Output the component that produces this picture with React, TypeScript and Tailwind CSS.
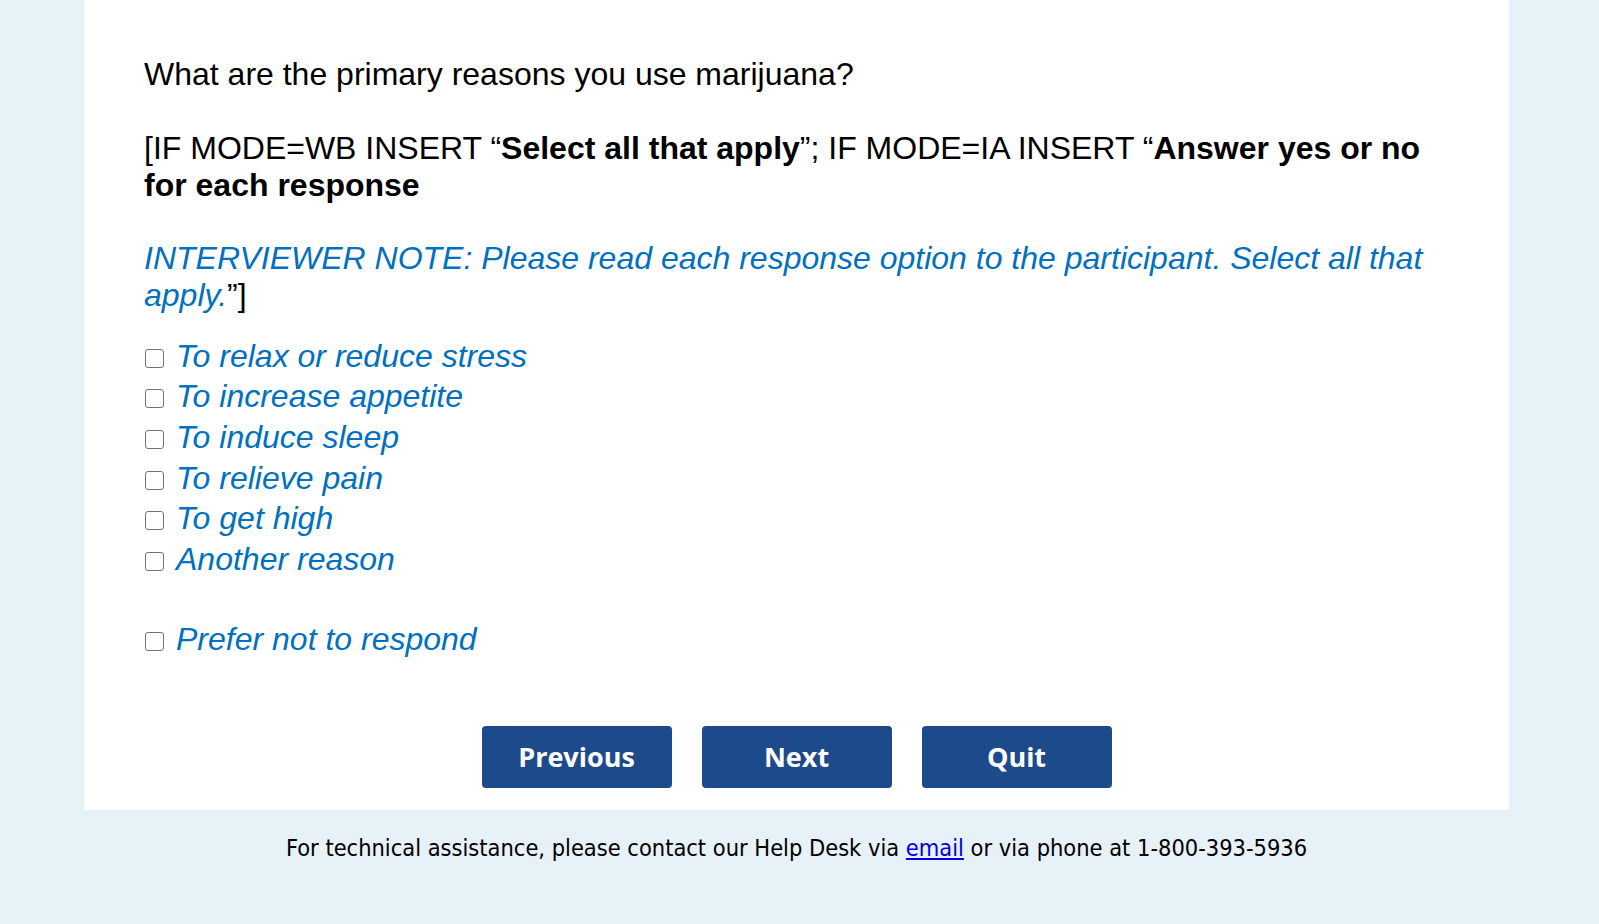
import React from "react";

const options = [
  "To relax or reduce stress",
  "To increase appetite",
  "To induce sleep",
  "To relieve pain",
  "To get high",
  "Another reason",
];

function Row({ label }: { label: string }) {
  return (
    <label className="flex items-start h-[40.7px] leading-[40.7px]">
      <span className="mt-[13px] ml-[1px] w-[19px] h-[19px] shrink-0 rounded-[3px] border-[1.5px] border-[#737373] bg-white" />
      <span className="ml-[12px] italic text-[#0070c0]">{label}</span>
    </label>
  );
}

export default function App() {
  return (
    <div className="min-h-[924px] w-full bg-[#e6f1f8]" style={{ fontFamily: '"Liberation Sans", Arial, sans-serif' }}>
      <div className="ml-[84px] w-[1425px] bg-white pl-[60px] pr-[60px] pt-[56px] pb-[22px] text-[32px] text-black">
        <p className="leading-[36.8px]">What are the primary reasons you use marijuana?</p>
        <p className="mt-[37px] leading-[36.8px]">
          [IF MODE=WB INSERT “<b>Select all that apply</b>”; IF MODE=IA INSERT “<b>Answer yes or no for each response</b>
        </p>
        <p className="mt-[36.7px] leading-[36.8px]">
          <span className="italic text-[#0070c0]">
            INTERVIEWER NOTE: Please read each response option to the participant. Select all that apply.
          </span>
          ”]
        </p>
        <div className="mt-[22px] flex flex-col">
          {options.map((o) => (
            <Row key={o} label={o} />
          ))}
        </div>
        <div className="mt-[39px]">
          <Row label="Prefer not to respond" />
        </div>
        <div className="mt-[67px] flex justify-center gap-[30px]" style={{ fontFamily: '"Open Sans", sans-serif' }}>
          {["Previous", "Next", "Quit"].map((b) => (
            <button
              key={b}
              className="w-[190px] h-[62px] rounded-[4px] bg-[#1d4a8b] text-white text-[27px] font-bold flex items-center justify-center"
            >
              {b}
            </button>
          ))}
        </div>
      </div>
      <div
        className="ml-[84px] w-[1425px] pt-[24px] text-center text-[23.4px] leading-[28px] text-black"
        style={{ fontFamily: '"DejaVu Sans Condensed", Tahoma, sans-serif' }}
      >
        For technical assistance, please contact our Help Desk via{" "}
        <a href="#" className="text-[#0000ee] underline">email</a> or via phone at 1-800-393-5936
      </div>
    </div>
  );
}
